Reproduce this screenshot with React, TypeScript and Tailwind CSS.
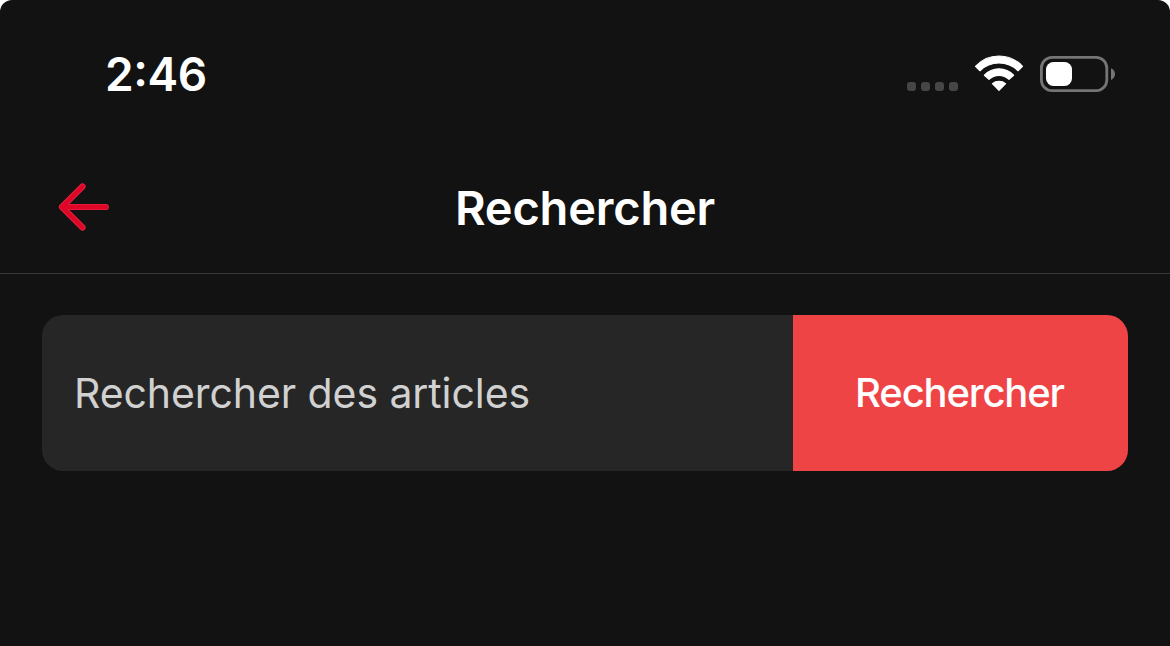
import React from 'react';

const ArrowLeftIcon: React.FC = () => (
  <svg width="52" height="50" viewBox="0 0 52 50" fill="none" strokeLinecap="round" strokeLinejoin="round">
    <path d="M47.8 25H4M24.5 4.5L4 25L24.5 45.5" stroke="#e4233f" strokeWidth="6.2" />
    <path d="M47.8 25H4M24.5 4.5L4 25L24.5 45.5" stroke="#df0527" strokeWidth="4.4" />
  </svg>
);

const WifiIcon: React.FC = () => (
  <svg width="50" height="38" viewBox="0 0 50 38" fill="white" stroke="white" strokeWidth="1.2" strokeLinejoin="round">
    <path d="M1.5 12.3A32 32 0 0 1 48.5 12.3L44 16.7A27.3 27.3 0 0 0 6 16.7Z" />
    <path d="M10.4 21.2A20 20 0 0 1 39.6 21.2L35 25.4A14.5 14.5 0 0 0 15 25.4Z" />
    <path d="M18.4 29.7A10.5 10.5 0 0 1 31.6 29.7L25 36.4Z" />
  </svg>
);

const BatteryIcon: React.FC = () => (
  <svg width="76" height="36" viewBox="0 0 76 36" fill="none">
    <rect x="1.4" y="1.4" width="65.4" height="33.2" rx="10.6" stroke="#757575" strokeWidth="2.8" />
    <rect x="6" y="6" width="26" height="24" rx="7.5" fill="white" />
    <path d="M71 12.2V24C73.4 23 75 20.7 75 18.1S73.4 13.2 71 12.2Z" fill="#757575" />
  </svg>
);

const StatusBar: React.FC = () => (
  <div className="flex h-[142px] items-center justify-between pl-[105px] pr-[54px] pt-[6px]">
    <span className="text-[46px] font-semibold leading-none tracking-[-0.4px] text-white [font-feature-settings:'case']">
      2:46
    </span>
    <div className="flex items-center">
      <div className="mt-[25px] mr-4 flex gap-[5px]">
        {[0, 1, 2, 3].map((dot) => (
          <span key={dot} className="h-[9px] w-[9px] rounded-[3px] bg-[#464646]" />
        ))}
      </div>
      <div className="mb-[2px]">
        <WifiIcon />
      </div>
      <div className="ml-4">
        <BatteryIcon />
      </div>
    </div>
  </div>
);

export default function App() {
  const [query, setQuery] = React.useState('');

  return (
    <div className="min-h-screen bg-white font-['Inter',sans-serif]">
      <div className="min-h-screen rounded-t-[12px] bg-[#121212]">
        <StatusBar />

        <header className="grid h-[132px] grid-cols-[1fr_auto_1fr] items-center border-b border-[#383838] pl-[58px] pr-[58px]">
          <button aria-label="Retour" className="mb-[2px] w-fit">
            <ArrowLeftIcon />
          </button>
          <h1 className="text-[47px] font-semibold leading-none tracking-[-0.2px] text-white">Rechercher</h1>
        </header>

        <form
          className="mx-[42px] mt-[41px] flex h-[156px] overflow-hidden rounded-[21px]"
          onSubmit={(e) => e.preventDefault()}
        >
          <input
            type="text"
            value={query}
            onChange={(e) => setQuery(e.target.value)}
            placeholder="Rechercher des articles"
            className="min-w-0 flex-1 bg-[#262626] px-8 pt-[2px] text-[41px] tracking-[-0.09px] text-white outline-none placeholder:text-[#d1d1d1]"
          />
          <button
            type="submit"
            className="w-[335px] bg-[#ef4446] pr-[2px] text-[40px] font-medium tracking-[-1.15px] text-white"
          >
            Rechercher
          </button>
        </form>
      </div>
    </div>
  );
}
